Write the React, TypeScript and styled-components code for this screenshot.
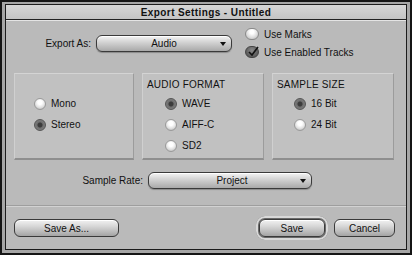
import React from 'react';
import styled, { createGlobalStyle, css } from 'styled-components';

const Global = createGlobalStyle`
    html, body {
        margin: 0;
        padding: 0;
        background: #000;
    }
    body {
        font-family: 'Liberation Sans', Arial, sans-serif;
        font-size: 10px;
        color: #111;
    }
`;

const Frame = styled.div`
    width: 412px;
    height: 255px;
    box-sizing: border-box;
    border: 2px solid #151515;
    padding: 2px 3px 3px 3px;
    background: #a6a6a6;
`;

const Window = styled.div`
    height: 100%;
    box-sizing: border-box;
    border: 1px solid #1c1c1c;
    background: #bababa;
    display: flex;
    flex-direction: column;
`;

const TitleBar = styled.div`
    height: 14px;
    flex: none;
    display: flex;
    align-items: center;
    justify-content: center;
    background: linear-gradient(#d6d6d6, #c4c4c4);
    border-bottom: 1px solid #222;
    box-shadow: 0 1px 0 #e4e4e4;
    font-weight: bold;
    font-size: 10px;
    letter-spacing: 0.4px;
`;

const Body = styled.div`
    flex: 1;
    display: flex;
    flex-direction: column;
`;

const TopRow = styled.div`
    height: 48px;
    flex: none;
    display: flex;
    align-items: center;
    padding-bottom: 2px;
    box-sizing: border-box;
`;

const FieldLabel = styled.span<{ $width: number }>`
    width: ${p => p.$width}px;
    text-align: right;
    padding-right: 5px;
    box-sizing: border-box;
    flex: none;
`;

const Popup = styled.div<{ $width: number }>`
    width: ${p => p.$width}px;
    height: 17px;
    flex: none;
    box-sizing: border-box;
    border: 1px solid #3a3a3a;
    border-radius: 6px;
    background: linear-gradient(#f4f4f4 0%, #d8d8d8 35%, #a9a9a9 100%);
    box-shadow: inset 0 1px 0 #fff, 0 1px 1px #8a8a8a;
    position: relative;
    display: flex;
    align-items: center;
    justify-content: center;
`;

const PopupText = styled.span<{ $shift: number }>`
    margin-left: ${p => p.$shift}px;
`;

const Arrow = styled.span`
    position: absolute;
    right: 5px;
    top: 6px;
    width: 0;
    height: 0;
    border-left: 3px solid transparent;
    border-right: 3px solid transparent;
    border-top: 4px solid #111;
`;

const CheckColumn = styled.div`
    margin-left: 13px;
    display: flex;
    flex-direction: column;
    gap: 5px;
`;

const Choice = styled.div`
    display: flex;
    align-items: center;
    gap: 5px;
    height: 13px;
`;

const CheckBox = styled.span<{ $on?: boolean }>`
    width: 14px;
    height: 12px;
    border-radius: 6px;
    box-sizing: border-box;
    border: 1px solid #8a8a8a;
    position: relative;
    ${p =>
        p.$on
            ? css`
                  background: radial-gradient(circle at 50% 35%, #8a8a8a, #555 80%);
                  border-color: #444;
              `
            : css`
                  background: radial-gradient(circle at 50% 30%, #fff 20%, #dcdcdc 60%, #aaa 100%);
              `}
`;

const Tick = styled.svg`
    position: absolute;
    left: 1px;
    top: -2px;
`;

const GroupRow = styled.div`
    display: flex;
    flex: none;
    gap: 8px;
    padding: 5px 0 0 8px;
    height: 92px;
    box-sizing: border-box;
`;

const GroupBox = styled.div<{ $width: number }>`
    width: ${p => p.$width}px;
    box-sizing: border-box;
    background: #c1c1c1;
    border-top: 1px solid #d4d4d4;
    border-left: 1px solid #d0d0d0;
    border-right: 1px solid #9c9c9c;
    border-bottom: 2px solid #8f8f8f;
    display: flex;
    flex-direction: column;
    padding: 5px 0 0 4px;
`;

const GroupTitle = styled.div`
    height: 12px;
    margin-bottom: 6px;
    letter-spacing: 0.2px;
`;

const Options = styled.div<{ $indent: number; $top: number }>`
    display: flex;
    flex-direction: column;
    gap: 8px;
    padding-left: ${p => p.$indent}px;
    padding-top: ${p => p.$top}px;
`;

const Radio = styled.span<{ $on?: boolean }>`
    width: 12px;
    height: 12px;
    border-radius: 50%;
    box-sizing: border-box;
    flex: none;
    ${p =>
        p.$on
            ? css`
                  border: 1px solid #555;
                  background: radial-gradient(circle at 50% 50%, #3c3c3c 0 2px, #6e6e6e 3px, #7c7c7c 70%, #5c5c5c);
              `
            : css`
                  border: 1px solid #9a9a9a;
                  background: radial-gradient(circle at 50% 35%, #fff 25%, #e0e0e0 60%, #a8a8a8 100%);
              `}
`;

const RateRow = styled.div`
    height: 28px;
    flex: none;
    display: flex;
    align-items: center;
    padding-top: 12px;
    box-sizing: border-box;
`;

const Separator = styled.div`
    height: 0;
    flex: none;
    margin-top: 17px;
    border-top: 1px solid #9e9e9e;
    border-bottom: 1px solid #d2d2d2;
`;

const ButtonRow = styled.div`
    flex: 1;
    display: flex;
    align-items: flex-start;
    padding: 12px 11px 0 8px;
`;

const Button = styled.div<{ $width: number; $default?: boolean }>`
    width: ${p => p.$width}px;
    height: 18px;
    box-sizing: border-box;
    border: 1px solid #3a3a3a;
    border-radius: 6px;
    background: linear-gradient(#f2f2f2 0%, #d6d6d6 40%, #a4a4a4 100%);
    box-shadow: inset 0 1px 0 #fff;
    display: flex;
    align-items: center;
    justify-content: center;
    ${p =>
        p.$default &&
        css`
            outline: 2px solid #d8d8d8;
            outline-offset: 1px;
            box-shadow: inset 0 1px 0 #fff, 0 0 0 3px #6a6a6a;
        `}
`;

const Spacer = styled.div`
    flex: 1;
`;

const ButtonGap = styled.div`
    width: 9px;
`;

type RadioItem = { label: string; on?: boolean };

const RadioList = ({ items, indent, top }: { items: RadioItem[]; indent: number; top: number }) => (
    <Options $indent={indent} $top={top}>
        {items.map(item => (
            <Choice key={item.label}>
                <Radio $on={item.on} />
                <span>{item.label}</span>
            </Choice>
        ))}
    </Options>
);

const App = () => (
    <>
        <Global />
        <Frame>
            <Window>
                <TitleBar>Export Settings - Untitled</TitleBar>
                <Body>
                    <TopRow>
                        <FieldLabel $width={90}>Export As:</FieldLabel>
                        <Popup $width={136}>
                            <PopupText $shift={0}>Audio</PopupText>
                            <Arrow />
                        </Popup>
                        <CheckColumn>
                            <Choice>
                                <CheckBox />
                                <span>Use Marks</span>
                            </Choice>
                            <Choice>
                                <CheckBox $on>
                                    <Tick width="12" height="12" viewBox="0 0 12 12">
                                        <path d="M2 7 L5 10 L11 2" stroke="#111" strokeWidth="1.6" fill="none" />
                                    </Tick>
                                </CheckBox>
                                <span>Use Enabled Tracks</span>
                            </Choice>
                        </CheckColumn>
                    </TopRow>
                    <GroupRow>
                        <GroupBox $width={120}>
                            <RadioList
                                indent={15}
                                top={18}
                                items={[{ label: 'Mono' }, { label: 'Stereo', on: true }]}
                            />
                        </GroupBox>
                        <GroupBox $width={122}>
                            <GroupTitle>AUDIO FORMAT</GroupTitle>
                            <RadioList
                                indent={18}
                                top={0}
                                items={[{ label: 'WAVE', on: true }, { label: 'AIFF-C' }, { label: 'SD2' }]}
                            />
                        </GroupBox>
                        <GroupBox $width={122}>
                            <GroupTitle>SAMPLE SIZE</GroupTitle>
                            <RadioList
                                indent={17}
                                top={0}
                                items={[{ label: '16 Bit', on: true }, { label: '24 Bit' }]}
                            />
                        </GroupBox>
                    </GroupRow>
                    <RateRow>
                        <FieldLabel $width={142}>Sample Rate:</FieldLabel>
                        <Popup $width={164}>
                            <PopupText $shift={4}>Project</PopupText>
                            <Arrow />
                        </Popup>
                    </RateRow>
                    <Separator />
                    <ButtonRow>
                        <Button $width={105}>Save As...</Button>
                        <Spacer />
                        <Button $width={66} $default>
                            Save
                        </Button>
                        <ButtonGap />
                        <Button $width={61}>Cancel</Button>
                    </ButtonRow>
                </Body>
            </Window>
        </Frame>
    </>
);

export default App;
